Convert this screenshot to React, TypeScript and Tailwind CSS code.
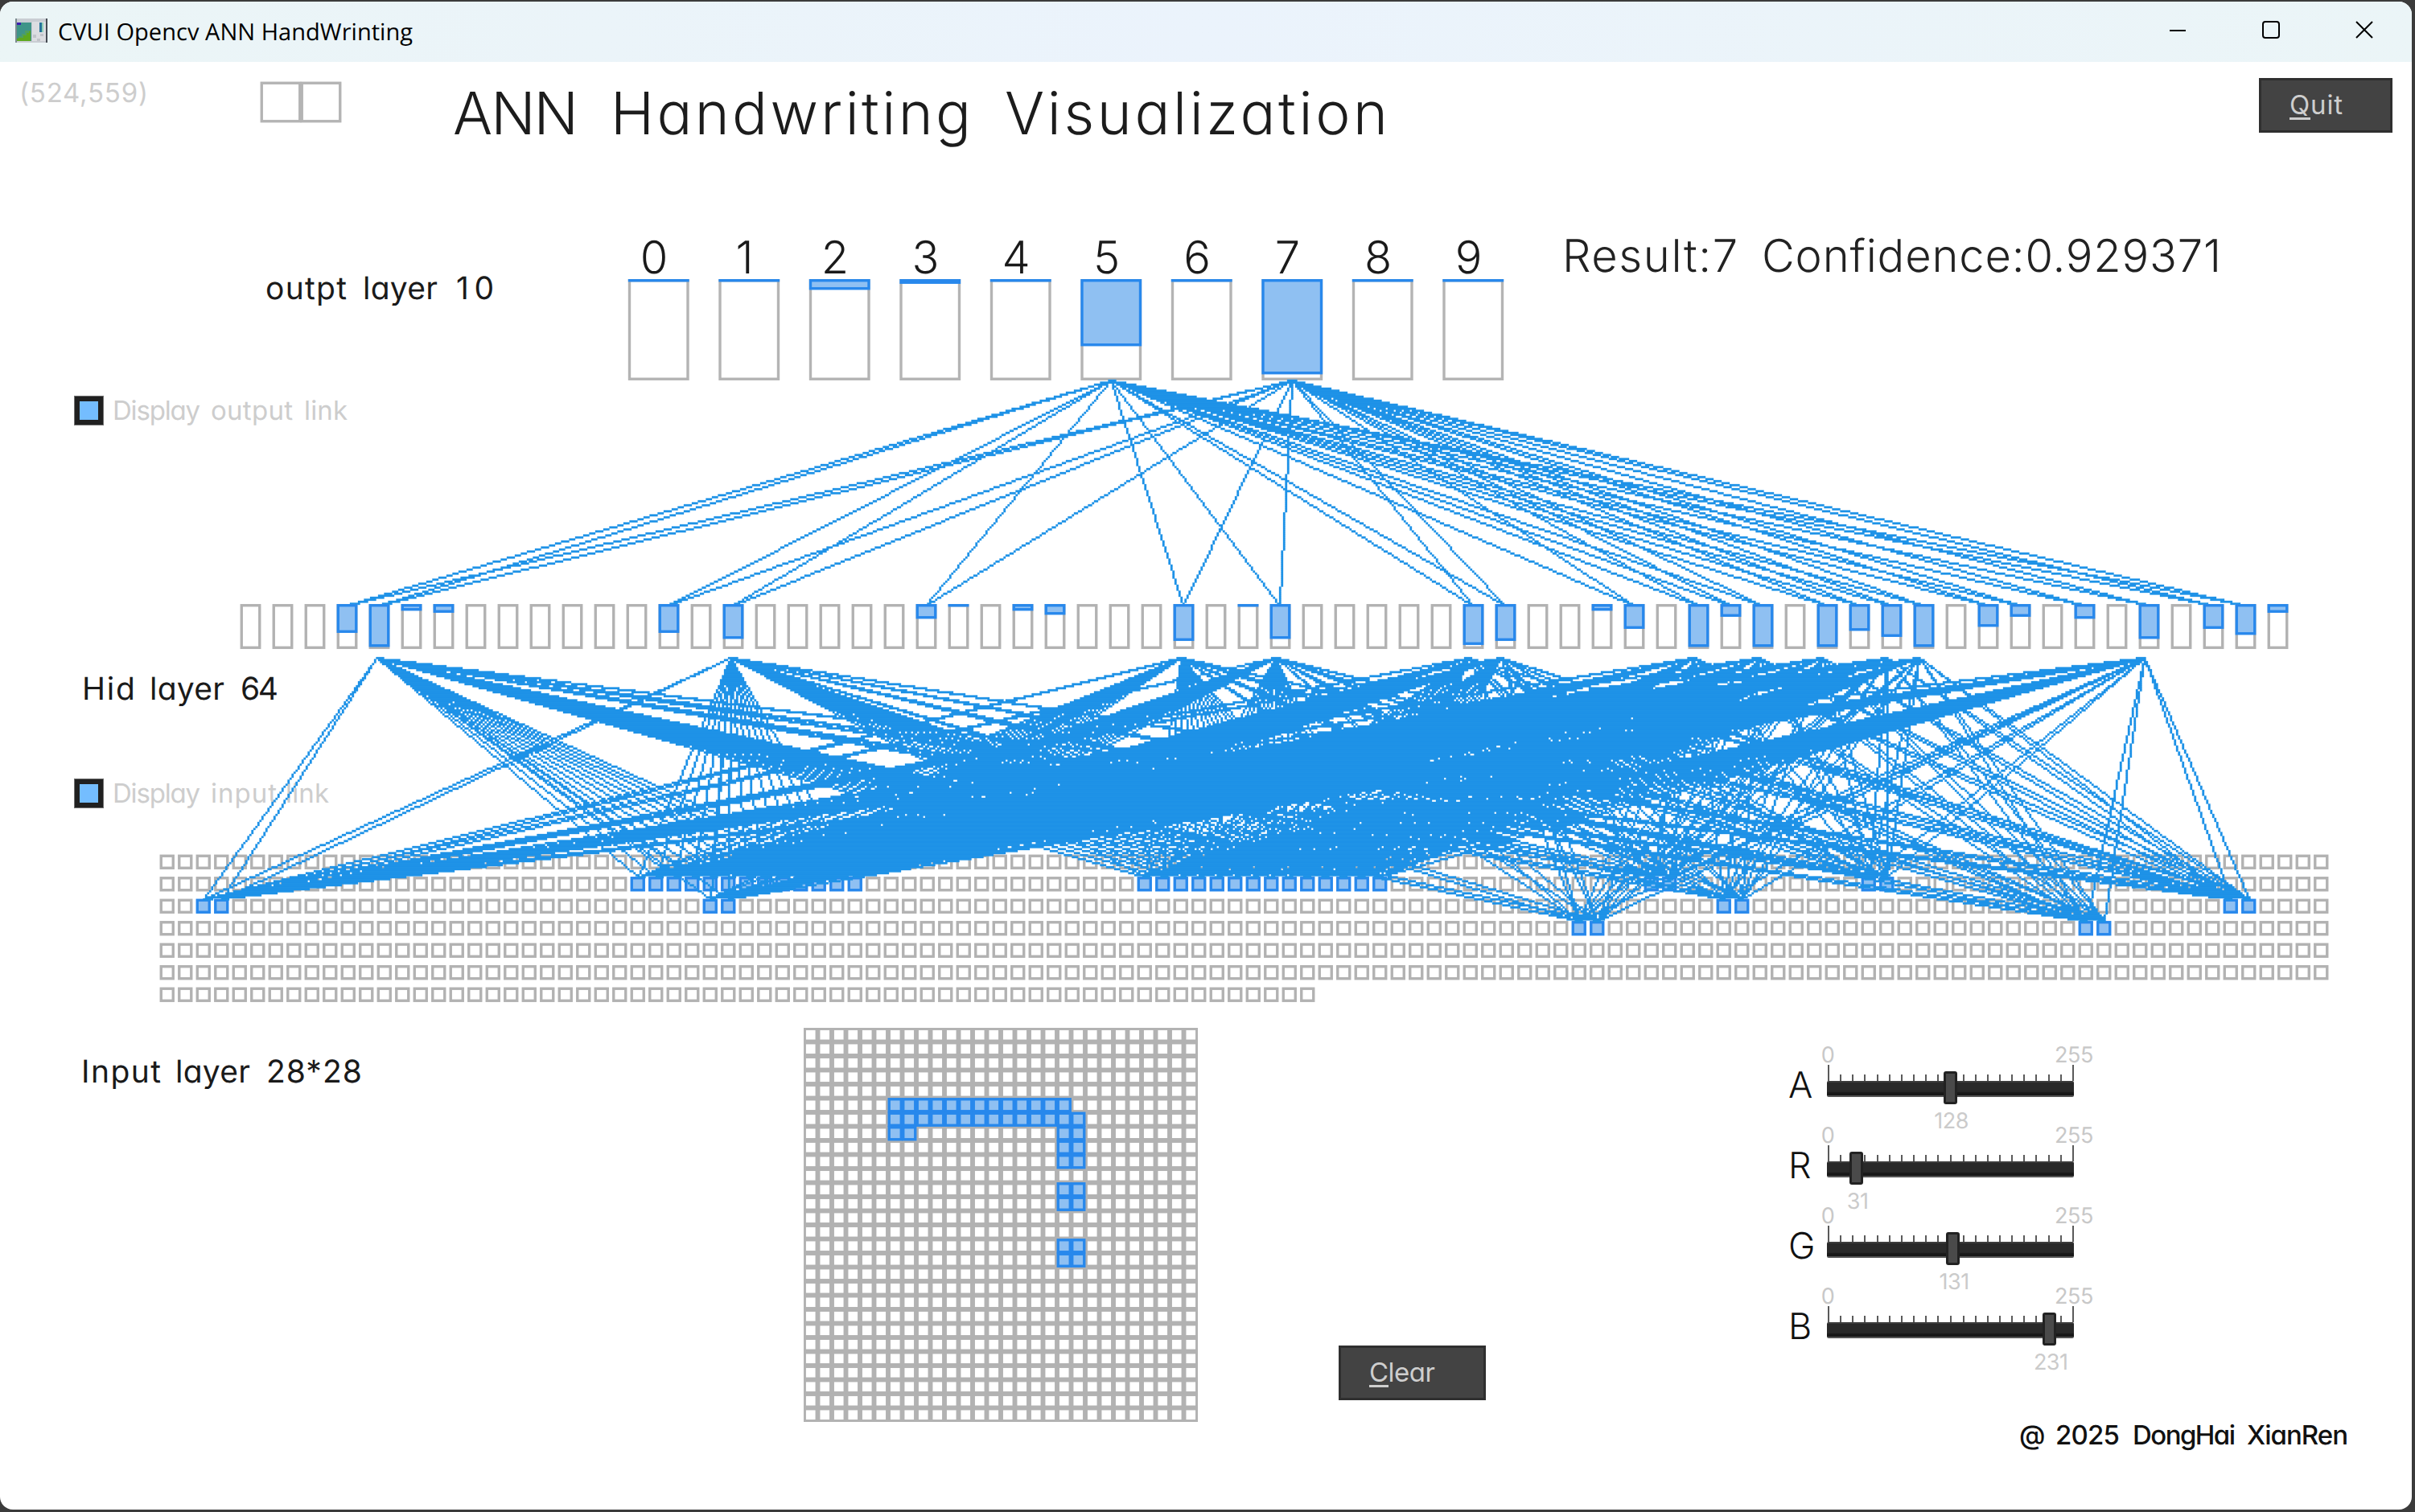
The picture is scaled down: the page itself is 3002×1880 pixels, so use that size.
import { useLayoutEffect, useRef, useState, type ReactNode } from "react";
import clsx from "clsx";

// One drawing unit of the visualisation equals 2.5 screen pixels.
const U = 2.5;
const GRAY = "#b2b2b2";
const EDGE = "#2888ec";
const FILL = "#8fc0f2";
const LINK = "#1f93e7";

type TextProps = { children: string; width: number; className?: string };

/** Single line of text whose letter spacing is adjusted so that it spans `width`. */
function FitText({ children, width, className }: TextProps) {
  const ref = useRef<HTMLSpanElement>(null);
  const [spacing, setSpacing] = useState(0);
  useLayoutEffect(() => {
    if (!ref.current) return;
    const natural = ref.current.getBoundingClientRect().width;
    setSpacing((width - natural) / Math.max(1, children.length - 1));
  }, [children, width]);
  return (
    <span className={clsx("block shrink-0 leading-none whitespace-pre", className)} style={{ width }}>
      <span ref={ref} className="block w-max" style={{ letterSpacing: spacing }}>
        {children}
      </span>
    </span>
  );
}

/** Words laid out one after another, each given as [text, width, gap before it]. */
function Words({ words, className }: { words: [string, number, number][]; className?: string }) {
  return (
    <div className={clsx("flex shrink-0 leading-none", className)}>
      {words.map(([text, width, gap]) => (
        <div key={text} className="flex" style={{ marginLeft: gap }}>
          <FitText width={width}>{text}</FitText>
        </div>
      ))}
    </div>
  );
}

type Cell = { x: number; y: number; w: number; h: number };

function Rects({ cells, stroke, fill }: { cells: Cell[]; stroke: string; fill: string }) {
  return (
    <>
      {cells.map((c, i) => (
        <rect
          key={i}
          x={c.x + 0.5}
          y={c.y + 0.5}
          width={c.w - 1}
          height={Math.max(0.01, c.h - 1)}
          fill={fill}
          stroke={stroke}
          strokeWidth={1.35}
        />
      ))}
    </>
  );
}

const outputs = [0, 0, 4, 1, 0, 32, 0, 46, 0, 0];

const hidden: Record<number, number> = {
  3: 13, 4: 20, 5: 2, 6: 3, 13: 13, 15: 16, 21: 6, 22: 0, 24: 2, 25: 4, 29: 17, 31: 0,
  32: 16, 38: 19, 39: 17, 42: 2, 43: 11, 45: 20, 46: 5, 47: 20, 49: 20, 50: 12, 51: 15,
  52: 20, 54: 10, 55: 5, 57: 6, 59: 16, 61: 11, 62: 14, 63: 3,
};

const lit = new Set<number>();
const litRows: [number, number, number][] = [
  [5, 6, 18], [6, 6, 19], [7, 6, 7], [7, 18, 19], [8, 18, 19], [9, 18, 19],
  [11, 18, 19], [12, 18, 19], [15, 18, 19], [16, 18, 19],
];
litRows.forEach(([r, a, b]) => {
  for (let c = a; c <= b; c++) lit.add(r * 28 + c);
});

/** Rasterises every link on the unit grid and returns the covered runs as one path. */
function linkPath() {
  const W = 1200;
  const H = 720;
  const bits = new Uint8Array(W * H);
  const line = (x0: number, y0: number, x1: number, y1: number) => {
    const dx = Math.abs(x1 - x0);
    const dy = Math.abs(y1 - y0);
    const sx = x0 < x1 ? 1 : -1;
    const sy = y0 < y1 ? 1 : -1;
    let err = dx - dy;
    for (;;) {
      bits[y0 * W + x0] = 1;
      if (x0 === x1 && y0 === y1) break;
      const e2 = 2 * err;
      if (e2 > -dy) {
        err -= dy;
        x0 += sx;
      }
      if (e2 < dx) {
        err += dx;
        y0 += sy;
      }
    }
  };
  const active = Object.entries(hidden).map(([i, v]) => [Number(i), v]);
  active
    .filter(([, v]) => v >= 5)
    .forEach(([i]) => {
      line(552, 158, 124 + i * 16, 270);
      line(642, 158, 124 + i * 16, 270);
    });
  active
    .filter(([, v]) => v >= 15)
    .forEach(([i]) => {
      const x = Math.floor(123.9 + 15.97 * i);
      lit.forEach((n) => line(x, 296, 83 + (n % 120) * 9, 405 + (Math.floor(n / 120) - 1) * 11));
    });
  let d = "";
  for (let y = 0; y < H; y++) {
    let x = 0;
    while (x < W) {
      if (!bits[y * W + x]) {
        x++;
        continue;
      }
      const start = x;
      while (x < W && bits[y * W + x]) x++;
      d += `M${start} ${y}h${x - start}v1h${start - x}z`;
    }
  }
  return d;
}

const LINKS = linkPath();

function OutputBars() {
  return (
    <svg width={575} height={130} viewBox="312 107 230 52" className="block overflow-visible">
      <Rects cells={outputs.map((_, i) => ({ x: 312.5 + i * 45, y: 108, w: 30, h: 50 }))} stroke="#b4b4b4" fill="#fff" />
      <Rects cells={outputs.map((v, i) => ({ x: 312.5 + i * 45, y: 108, w: 30, h: v + 1 }))} stroke={EDGE} fill={FILL} />
    </svg>
  );
}

function HiddenCells() {
  const all = Array.from({ length: 64 }, (_, i) => ({ x: 120 + i * 16, y: 270, w: 10, h: 22 }));
  const on = Object.entries(hidden).map(([i, v]) => ({ x: 120 + Number(i) * 16, y: 270, w: 10, h: v + 1 }));
  return (
    <svg width={2560} height={60} viewBox="120 269 1024 24" className="relative block overflow-visible">
      <Rects cells={all} stroke={GRAY} fill="none" />
      <Rects cells={on} stroke={EDGE} fill={FILL} />
    </svg>
  );
}

function InputCells() {
  const cell = (n: number) => ({ x: 80 + (n % 120) * 9, y: 394 + Math.floor(n / 120) * 11, w: 7, h: 7 });
  const off = Array.from({ length: 784 }, (_, n) => n).filter((n) => !lit.has(n));
  return (
    <svg width={2700} height={185} viewBox="80 394 1080 74" className="block overflow-visible">
      <Rects cells={off.map(cell)} stroke={GRAY} fill="none" />
      <Rects cells={[...lit].map(cell)} stroke={EDGE} fill={FILL} />
    </svg>
  );
}

function DrawingPad() {
  const cell = (n: number) => ({ x: (n % 28) * 7, y: Math.floor(n / 28) * 7, w: 7, h: 7 });
  const off = Array.from({ length: 784 }, (_, n) => n).filter((n) => !lit.has(n));
  return (
    <svg width={490} height={490} viewBox="0 0 196 196" className="block">
      <Rects cells={off.map(cell)} stroke={GRAY} fill="#fff" />
      <Rects cells={[...lit].map(cell)} stroke={EDGE} fill={FILL} />
    </svg>
  );
}

function Checkbox({ words }: { words: [string, number, number][] }) {
  return (
    <div className="flex items-start">
      <div className="size-[37px] border border-[#707070] bg-[#202020] p-[6px]">
        <div className="size-full bg-[#74bdff]" />
      </div>
      <Words words={words} className="mt-[2px] ml-[11px] text-[33px] text-[#cdcdcd]" />
    </div>
  );
}

function Button({ children, className }: { children: ReactNode; className: string }) {
  return (
    <button
      className={clsx("block h-[68px] border-[3px] border-[#2f2f2f] bg-[#434343] text-left text-[#cecece]", className)}
    >
      {children}
    </button>
  );
}

function Slider({ name, value }: { name: string; value: number }) {
  const pos = value * 1.2 - 2;
  return (
    <div className="flex h-[100px]">
      <span className="mt-[27px] w-[49px] text-[45px] leading-none font-light text-[#111]">{name}</span>
      <div className="relative w-[306px]">
        <div className="-mt-px flex h-[27px] justify-between text-[27px] leading-none tracking-[-0.5px] text-[#c8c8c8]">
          <span className="flex w-0 justify-center">0</span>
          <span className="flex w-0 justify-center">255</span>
        </div>
        <div className="flex h-[19px] items-end justify-between">
          {Array.from({ length: 21 }, (_, i) => (
            <span
              key={i}
              className={clsx("w-[2px] bg-[#5a5a5a]", i % 20 === 0 ? "h-[20px]" : "h-[8px]", i === 10 && "ml-px")}
            />
          ))}
        </div>
        <div className="-ml-px h-[20px] rounded-[2px] border-y-2 border-t-[#3c3c3c] border-b-[#555] bg-linear-to-b from-[#292929] from-70% to-[#181818] to-80%" />
        <div
          className="absolute top-[33px] h-[41px] w-[17px] rounded-[3px] border-[3px] border-[#222] bg-[#4a4a4a]"
          style={{ left: pos - 8 }}
        />
        <div
          className="absolute top-[81px] flex w-0 justify-center text-[27px] leading-none tracking-[-0.5px] text-[#cbcbcb]"
          style={{ left: pos + 2 }}
        >
          {value}
        </div>
      </div>
    </div>
  );
}

function AppIcon() {
  return (
    <svg width={40} height={30} viewBox="0 0 40 30" className="block">
      <rect width={40} height={30} fill="#c9cdd3" />
      <rect width={2} height={30} fill="#7c8b90" />
      <rect x={38} width={2} height={30} fill="#454a52" />
      <rect x={2} y={5} width={18} height={23} fill="#3f9488" />
      <rect x={2} y={5} width={5} height={3} fill="#3a1fb0" />
      <path d="M2 28v-3l6-2 5-5 6-3v13z" fill="#5da81e" />
      <path d="M4 22h4v-3h4v-4h5v3h-3v3h-4v3H4z" fill="#4f9f60" />
      <rect x={21} y={4} width={17} height={24} fill="#dcdde1" />
      <rect x={30} y={5} width={3} height={12} fill="#27749b" />
      <rect x={33} y={5} width={2} height={12} fill="#8fd0b8" />
      <path d="M22 20h4v4h-4zM31 19h4v3h-4zM27 25h4v3h-4z" fill="#c2c4ca" />
    </svg>
  );
}

function TitleBar() {
  return (
    <header className="flex h-[75px] shrink-0 items-start bg-linear-to-r from-[#ebf5f6] via-[#ebf3fc] to-[#ebf5f7] text-black">
      <div className="mt-[21px] ml-[19px]">
        <AppIcon />
      </div>
      <FitText width={441} className="mt-[23px] ml-[13px] font-['Open_Sans',sans-serif] text-[29px]">
        CVUI Opencv ANN HandWrinting
      </FitText>
      <div className="mt-[24px] mr-[48px] ml-auto flex gap-[94px]">
        <svg width={22} height={22} viewBox="0 0 22 22" fill="none" stroke="#000" strokeWidth={2}>
          <path d="M1 12h20" />
        </svg>
        <svg width={22} height={22} viewBox="0 0 22 22" fill="none" stroke="#000" strokeWidth={2}>
          <rect x={1} y={1} width={20} height={20} rx={3} />
        </svg>
        <svg width={22} height={22} viewBox="0 0 22 22" fill="none" stroke="#000" strokeWidth={2}>
          <path d="M1 1l20 20M21 1L1 21" />
        </svg>
      </div>
    </header>
  );
}

export default function App() {
  return (
    <div className="flex h-[1880px] w-[3002px] flex-col bg-[#3b3b3b] pt-[2px] pr-[4px] pb-[3px] font-[Inter,sans-serif] [font-feature-settings:'cv11'] [text-rendering:geometricPrecision]">
      <div className="flex grow flex-col overflow-hidden rounded-[16px] bg-white">
        <TitleBar />
        <main className="relative flex h-[1800px] flex-col">
          <svg width={1200 * U} height={720 * U} viewBox="0 0 1200 720" className="absolute top-0 left-0">
            <path d={LINKS} fill={LINK} stroke={LINK} strokeWidth={0.12} />
          </svg>

          <section className="flex h-[220px] items-start">
            <FitText width={160} className="mt-[22px] ml-[24px] text-[33px] text-[#cdcdcd]">
              (524,559)
            </FitText>
            <svg width={100} height={50} viewBox="130 10 40 20" className="mt-[25px] ml-[140px] block overflow-visible">
              <Rects cells={[{ x: 130, y: 10, w: 20, h: 20 }, { x: 150, y: 10, w: 20, h: 20 }]} stroke="#b4b4b4" fill="#fff" />
            </svg>
            <h1>
              <Words
                words={[["ANN", 156, 0], ["Handwriting", 448, 40], ["Visualization", 476, 42]]}
                className="mt-[27px] ml-[139px] text-[73px] font-light text-[#1c1c1c]"
              />
            </h1>
            <Button className="mt-[20px] mr-[24px] ml-auto w-[166px] pl-[35px]">
              <FitText width={66} className="text-[33px]">Quit</FitText>
              <span className="-mt-[1px] block h-[3px] w-[26px] bg-[#cecece]" />
            </Button>
          </section>

          <section className="flex h-[190px] items-start">
            <Words
              words={[["outpt", 101, 0], ["layer", 93, 20], ["10", 47, 23]]}
              className="mt-[42px] ml-[330px] w-[284px] text-[39px] text-[#1a1a1a]"
            />
            <div className="ml-[166px] w-[1100px]">
              <div className="ml-[-23px] flex h-[48px]">
                {outputs.map((_, i) => (
                  <span
                    key={i}
                    className="-mt-[5px] mr-[0.5px] w-[112px] shrink-0 text-center text-[56px] leading-none font-light text-[#1a1a1a]"
                  >
                    {i}
                  </span>
                ))}
              </div>
              <OutputBars />
            </div>
            <Words
              words={[["Result:7", 218, 0], ["Confidence:0.929371", 571, 30]]}
              className="-mt-[7px] ml-[62px] text-[56px] font-light text-[#222]"
            />
          </section>

          <section className="h-[262px] pt-[5px] pl-[92px]">
            <Checkbox words={[["Display", 109, 0], ["output", 102, 13], ["link", 54, 14]]} />
          </section>

          <section className="h-[60px] pl-[299px]">
            <HiddenCells />
          </section>

          <section className="flex h-[254px] flex-col items-start pt-[28px] pl-[92px]">
            <Words
              words={[["Hid", 66, 0], ["layer", 93, 18], ["64", 47, 20]]}
              className="ml-[10px] text-[39px] text-[#1a1a1a]"
            />
            <div className="mt-[92px]">
              <Checkbox words={[["Display", 109, 0], ["input", 82, 13], ["link", 54, 11]]} />
            </div>
          </section>

          <section className="h-[214px] pl-[199px]">
            <InputCells />
          </section>

          <section className="flex grow items-start">
            <Words
              words={[["Input", 99, 0], ["layer", 93, 18], ["28*28", 125, 20]]}
              className="mt-[36px] ml-[101px] w-[351px] text-[39px] text-[#1a1a1a]"
            />
            <div className="mt-px ml-[547px]">
              <DrawingPad />
            </div>
            <div className="ml-[175px] pt-[396px]">
              <Button className="w-[183px] pl-[35px]">
                <FitText width={82} className="text-[33px]">Clear</FitText>
                <span className="-mt-[1px] block h-[3px] w-[24px] bg-[#cecece]" />
              </Button>
            </div>
            <div className="ml-[376px] flex w-[720px] flex-col pt-[22px]">
              <Slider name="A" value={128} />
              <Slider name="R" value={31} />
              <Slider name="G" value={131} />
              <Slider name="B" value={231} />
              <Words
                words={[["@", 28, 0], ["2025", 80, 17], ["DongHai", 128, 16], ["XianRen", 126, 14]]}
                className="mt-[69px] ml-[287px] text-[33px] font-medium text-[#111]"
              />
            </div>
          </section>
        </main>
      </div>
    </div>
  );
}
